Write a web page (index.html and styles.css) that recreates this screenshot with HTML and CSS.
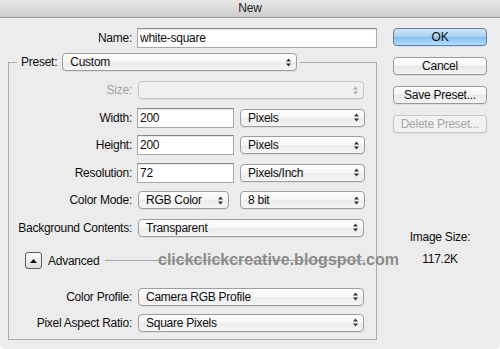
FILE: index.html
```html
<!DOCTYPE html>
<html lang="en">
<head>
    <meta charset="UTF-8">
    <title>New</title>
    <link rel="stylesheet" href="styles.css">
</head>
<body>
    <div class="window">
        <div class="titlebar">New</div>
        <div class="dialog">
            <div class="main">
                <div class="row">
                    <label class="label" for="name">Name:</label>
                    <input class="text name-input" id="name" type="text" value="white-square">
                </div>

                <fieldset class="preset">
                    <legend>
                        <span class="legend-label">Preset:</span>
                        <div class="select preset-select"><span>Custom</span>
                            <svg class="arrows" width="5" height="9" viewBox="0 0 5 9"><path d="M0 3.5 2.5 0.5 5 3.5Z M0 5.5 2.5 8.5 5 5.5Z"/></svg>
                        </div>
                    </legend>

                    <div class="fields">
                        <div class="row">
                            <span class="label disabled">Size:</span>
                            <div class="select full off"><span></span>
                                <svg class="arrows" width="5" height="9" viewBox="0 0 5 9"><path d="M0 3.5 2.5 0.5 5 3.5Z M0 5.5 2.5 8.5 5 5.5Z"/></svg>
                            </div>
                        </div>
                        <div class="row">
                            <label class="label" for="width">Width:</label>
                            <input class="text num-input" id="width" type="text" value="200">
                            <div class="select unit"><span>Pixels</span>
                                <svg class="arrows" width="5" height="9" viewBox="0 0 5 9"><path d="M0 3.5 2.5 0.5 5 3.5Z M0 5.5 2.5 8.5 5 5.5Z"/></svg>
                            </div>
                        </div>
                        <div class="row">
                            <label class="label" for="height">Height:</label>
                            <input class="text num-input" id="height" type="text" value="200">
                            <div class="select unit"><span>Pixels</span>
                                <svg class="arrows" width="5" height="9" viewBox="0 0 5 9"><path d="M0 3.5 2.5 0.5 5 3.5Z M0 5.5 2.5 8.5 5 5.5Z"/></svg>
                            </div>
                        </div>
                        <div class="row">
                            <label class="label" for="res">Resolution:</label>
                            <input class="text num-input" id="res" type="text" value="72">
                            <div class="select unit"><span>Pixels/Inch</span>
                                <svg class="arrows" width="5" height="9" viewBox="0 0 5 9"><path d="M0 3.5 2.5 0.5 5 3.5Z M0 5.5 2.5 8.5 5 5.5Z"/></svg>
                            </div>
                        </div>
                        <div class="row">
                            <span class="label">Color Mode:</span>
                            <div class="select mode"><span>RGB Color</span>
                                <svg class="arrows" width="5" height="9" viewBox="0 0 5 9"><path d="M0 3.5 2.5 0.5 5 3.5Z M0 5.5 2.5 8.5 5 5.5Z"/></svg>
                            </div>
                            <div class="select unit"><span>8 bit</span>
                                <svg class="arrows" width="5" height="9" viewBox="0 0 5 9"><path d="M0 3.5 2.5 0.5 5 3.5Z M0 5.5 2.5 8.5 5 5.5Z"/></svg>
                            </div>
                        </div>
                        <div class="row">
                            <span class="label">Background Contents:</span>
                            <div class="select full"><span>Transparent</span>
                                <svg class="arrows" width="5" height="9" viewBox="0 0 5 9"><path d="M0 3.5 2.5 0.5 5 3.5Z M0 5.5 2.5 8.5 5 5.5Z"/></svg>
                            </div>
                        </div>
                    </div>

                    <div class="advanced">
                        <span class="disclosure">
                            <svg width="7" height="4" viewBox="0 0 7 4"><path d="M0 4 3.5 0 7 4Z"/></svg>
                        </span>
                        <span>Advanced</span>
                        <span class="rule"></span>
                    </div>

                    <div class="fields profile">
                        <div class="row">
                            <span class="label">Color Profile:</span>
                            <div class="select full"><span>Camera RGB Profile</span>
                                <svg class="arrows" width="5" height="9" viewBox="0 0 5 9"><path d="M0 3.5 2.5 0.5 5 3.5Z M0 5.5 2.5 8.5 5 5.5Z"/></svg>
                            </div>
                        </div>
                        <div class="row">
                            <span class="label">Pixel Aspect Ratio:</span>
                            <div class="select full"><span>Square Pixels</span>
                                <svg class="arrows" width="5" height="9" viewBox="0 0 5 9"><path d="M0 3.5 2.5 0.5 5 3.5Z M0 5.5 2.5 8.5 5 5.5Z"/></svg>
                            </div>
                        </div>
                    </div>
                </fieldset>
            </div>

            <div class="side">
                <button class="btn primary">OK</button>
                <button class="btn">Cancel</button>
                <button class="btn">Save Preset...</button>
                <button class="btn" disabled>Delete Preset...</button>
                <div class="info">
                    <div>Image Size:</div>
                    <div class="info-value">117.2K</div>
                </div>
            </div>
        </div>

        <div class="watermark">clickclickcreative.blogspot.com</div>
    </div>
</body>
</html>
```

FILE: styles.css
```css
* {
    box-sizing: border-box;
}
body {
    margin: 0;
    background: #fff;
    font-family: "Liberation Sans", Arial, sans-serif;
    font-size: 12px;
    letter-spacing: -0.25px;
    color: #0e0e0e;
}
.window {
    position: relative;
    width: 500px;
    height: 349px;
    background: #ececec;
    border-radius: 0 0 5px 5px;
    overflow: hidden;
}
.titlebar {
    height: 18px;
    line-height: 17px;
    text-align: center;
    color: #222;
    background: linear-gradient(#e9e9e9, #cccccc);
    border-bottom: 1px solid #999;
}
.dialog {
    display: flex;
    padding: 10px 0 0 8px;
}
.main {
    width: 369px;
}
.side {
    width: 94px;
    margin-left: 16px;
    display: flex;
    flex-direction: column;
    gap: 11px;
}

.row {
    display: flex;
    align-items: center;
    height: 20px;
}
.label {
    flex: none;
    width: 124px;
    margin-right: 5px;
    text-align: right;
}
.fields .label {
    width: 123px;
}
.label.disabled {
    color: #a2a2a2;
}

.text {
    height: 20px;
    padding: 0 2px;
    font: inherit;
    letter-spacing: inherit;
    color: inherit;
    background: #fff;
    border: 1px solid #a8a8a8;
    border-top-color: #8a8a8a;
    box-shadow: inset 0 1px 1px rgba(0, 0, 0, 0.1);
    outline: none;
}
.name-input {
    width: 240px;
}
.num-input {
    width: 97px;
    margin-right: 6px;
}

.select {
    display: flex;
    align-items: center;
    justify-content: space-between;
    height: 18px;
    padding: 0 5px 0 7px;
    border: 1px solid #9d9d9d;
    border-radius: 4px;
    background: linear-gradient(#fefefe, #f6f6f6 50%, #ececec 51%, #f5f5f5);
    box-shadow: 0 1px 0 rgba(0, 0, 0, 0.06);
}
.arrows {
    fill: #333;
    flex: none;
}
.select.off {
    border-color: #c4c4c4;
    background: #f0f0f0;
}
.select.off .arrows {
    fill: #a8a8a8;
}
.preset-select {
    width: 235px;
}
.full {
    width: 226px;
    margin-left: 1px;
}
.unit {
    width: 125px;
}
.mode {
    width: 91px;
    margin: 0 11px 0 1px;
}

.preset {
    margin: 5px 0 0;
    padding: 9px 0 6px;
    border: 1px solid #ababab;
    min-width: 0;
}
.preset legend {
    display: flex;
    align-items: center;
    height: 18px;
    margin-left: 8px;
    padding: 0 3px 0 4px;
}
.legend-label {
    margin-right: 5px;
}

.fields {
    display: flex;
    flex-direction: column;
    gap: 7.6px;
}
.fields.profile {
    gap: 6px;
    margin-top: 17px;
}

.advanced {
    display: flex;
    align-items: center;
    gap: 6px;
    height: 18px;
    margin: 14px 11px 0 16px;
}
.disclosure {
    display: flex;
    align-items: center;
    justify-content: center;
    width: 17px;
    height: 17px;
    border: 1px solid #5e5e5e;
    border-radius: 3px;
    background: linear-gradient(#fdfdfd, #dedede);
}
.disclosure svg {
    fill: #111;
}
.rule {
    flex: 1;
    height: 1px;
    background: #a6a6a6;
}

.btn {
    height: 18px;
    padding: 0;
    font: inherit;
    letter-spacing: inherit;
    color: #0e0e0e;
    border: 1px solid #999;
    border-radius: 4px;
    background: linear-gradient(#fefefe, #f4f4f4 50%, #e8e8e8 51%, #f4f4f4);
    box-shadow: 0 1px 0 rgba(0, 0, 0, 0.06);
}
.btn.primary {
    border-color: #5d80a6;
    background: linear-gradient(#cfe6fa, #a4d0f5 50%, #86bff0 51%, #b6ddfb);
}
.btn:disabled {
    color: #a6a6a6;
    border-color: #c6c6c6;
    background: #f2f2f2;
}

.info {
    margin-top: 85px;
    text-align: center;
    line-height: 16px;
}
.info-value {
    margin-top: 6px;
}

.watermark {
    position: absolute;
    left: 158px;
    top: 251px;
    font-size: 16px;
    font-weight: bold;
    letter-spacing: 0;
    color: #8b8b8b;
}
```
